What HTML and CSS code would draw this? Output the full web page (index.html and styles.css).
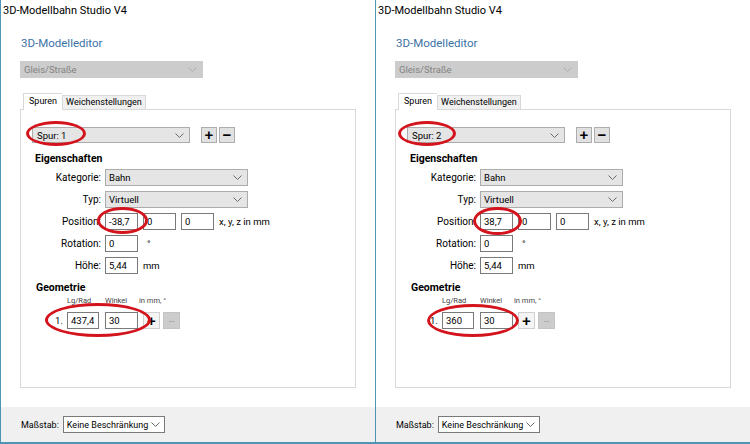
FILE: index.html
```html
<!DOCTYPE html>
<html lang="de">
<head>
  <meta charset="UTF-8">
  <title>3D-Modellbahn Studio V4 | Modelleditor</title>
  <link rel="stylesheet" href="styles.css">
</head>
<body>
<div class="screen">

  <!-- Fenster 1: Spur 1 -->
  <div class="win">
    <div class="titlebar">3D-Modellbahn Studio V4</div>
    <div class="content">
      <h1 class="heading">3D-Modelleditor</h1>
      <div class="combo combo-disabled combo-type">
        <span>Gleis/Straße</span>
        <svg class="chev" width="9" height="5" viewBox="0 0 9 5"><polyline points="0.5,0.5 4.5,4.5 8.5,0.5" /></svg>
      </div>
      <div class="tabs">
        <div class="tab active">Spuren</div>
        <div class="tab">Weichenstellungen</div>
      </div>
      <div class="panel">
        <div class="spur-row">
          <div class="combo combo-spur">
            <span>Spur: 1</span>
            <svg class="chev" width="9" height="5" viewBox="0 0 9 5"><polyline points="0.5,0.5 4.5,4.5 8.5,0.5" /></svg>
          </div>
          <button class="btn btn-add">+</button>
          <button class="btn btn-remove">−</button>
        </div>

        <div class="group-title">Eigenschaften</div>
        <div class="form">
          <label>Kategorie:</label>
          <div class="combo combo-wide">
            <span>Bahn</span>
            <svg class="chev" width="9" height="5" viewBox="0 0 9 5"><polyline points="0.5,0.5 4.5,4.5 8.5,0.5" /></svg>
          </div>
          <label>Typ:</label>
          <div class="combo combo-wide">
            <span>Virtuell</span>
            <svg class="chev" width="9" height="5" viewBox="0 0 9 5"><polyline points="0.5,0.5 4.5,4.5 8.5,0.5" /></svg>
          </div>
          <label>Position:</label>
          <div class="field-row">
            <div class="input">-38,7</div>
            <div class="input">0</div>
            <div class="input">0</div>
            <span class="unit">x, y, z in mm</span>
          </div>
          <label>Rotation:</label>
          <div class="field-row">
            <div class="input">0</div>
            <span class="unit unit-deg">°</span>
          </div>
          <label>Höhe:</label>
          <div class="field-row">
            <div class="input">5,44</div>
            <span class="unit">mm</span>
          </div>
        </div>

        <div class="group-title geo-title">Geometrie</div>
        <div class="geo-head">
          <span class="geo-num"></span>
          <span class="geo-col1">Lg/Rad</span>
          <span class="geo-col2">Winkel</span>
          <span>in mm, °</span>
        </div>
        <div class="geo-row">
          <span class="geo-num">1.</span>
          <div class="input input-len">437,4</div>
          <div class="input input-angle">30</div>
          <button class="btn btn-geo">+</button>
          <button class="btn btn-off">--</button>
        </div>
      </div>
    </div>
    <div class="statusbar">
      <span>Maßstab:</span>
      <div class="combo combo-scale">
        <span>Keine Beschränkung</span>
        <svg class="chev" width="9" height="5" viewBox="0 0 9 5"><polyline points="0.5,0.5 4.5,4.5 8.5,0.5" /></svg>
      </div>
    </div>

    <div class="mark mark-spur"></div>
    <div class="mark mark-pos"></div>
    <div class="mark mark-geo"></div>
  </div>

  <!-- Fenster 2: Spur 2 -->
  <div class="win win-right">
    <div class="titlebar">3D-Modellbahn Studio V4</div>
    <div class="content">
      <h1 class="heading">3D-Modelleditor</h1>
      <div class="combo combo-disabled combo-type">
        <span>Gleis/Straße</span>
        <svg class="chev" width="9" height="5" viewBox="0 0 9 5"><polyline points="0.5,0.5 4.5,4.5 8.5,0.5" /></svg>
      </div>
      <div class="tabs">
        <div class="tab active">Spuren</div>
        <div class="tab">Weichenstellungen</div>
      </div>
      <div class="panel">
        <div class="spur-row">
          <div class="combo combo-spur">
            <span>Spur: 2</span>
            <svg class="chev" width="9" height="5" viewBox="0 0 9 5"><polyline points="0.5,0.5 4.5,4.5 8.5,0.5" /></svg>
          </div>
          <button class="btn btn-add">+</button>
          <button class="btn btn-remove">−</button>
        </div>

        <div class="group-title">Eigenschaften</div>
        <div class="form">
          <label>Kategorie:</label>
          <div class="combo combo-wide">
            <span>Bahn</span>
            <svg class="chev" width="9" height="5" viewBox="0 0 9 5"><polyline points="0.5,0.5 4.5,4.5 8.5,0.5" /></svg>
          </div>
          <label>Typ:</label>
          <div class="combo combo-wide">
            <span>Virtuell</span>
            <svg class="chev" width="9" height="5" viewBox="0 0 9 5"><polyline points="0.5,0.5 4.5,4.5 8.5,0.5" /></svg>
          </div>
          <label>Position:</label>
          <div class="field-row">
            <div class="input">38,7</div>
            <div class="input">0</div>
            <div class="input">0</div>
            <span class="unit">x, y, z in mm</span>
          </div>
          <label>Rotation:</label>
          <div class="field-row">
            <div class="input">0</div>
            <span class="unit unit-deg">°</span>
          </div>
          <label>Höhe:</label>
          <div class="field-row">
            <div class="input">5,44</div>
            <span class="unit">mm</span>
          </div>
        </div>

        <div class="group-title geo-title">Geometrie</div>
        <div class="geo-head">
          <span class="geo-num"></span>
          <span class="geo-col1">Lg/Rad</span>
          <span class="geo-col2">Winkel</span>
          <span>in mm, °</span>
        </div>
        <div class="geo-row">
          <span class="geo-num">1.</span>
          <div class="input input-len">360</div>
          <div class="input input-angle">30</div>
          <button class="btn btn-geo">+</button>
          <button class="btn btn-off">--</button>
        </div>
      </div>
    </div>
    <div class="statusbar">
      <span>Maßstab:</span>
      <div class="combo combo-scale">
        <span>Keine Beschränkung</span>
        <svg class="chev" width="9" height="5" viewBox="0 0 9 5"><polyline points="0.5,0.5 4.5,4.5 8.5,0.5" /></svg>
      </div>
    </div>

    <div class="mark mark-spur"></div>
    <div class="mark mark-pos"></div>
    <div class="mark mark-geo"></div>
  </div>

</div>
</body>
</html>
```

FILE: styles.css
```css
* {
  box-sizing: border-box;
}
body {
  margin: 0;
  background: #fff;
  font-family: Roboto, "Liberation Sans", sans-serif;
  font-size: 9.5px;
  color: #000;
}
.screen {
  display: flex;
  width: 750px;
  height: 444px;
}
.win {
  position: relative;
  width: 375px;
  height: 444px;
  display: flex;
  flex-direction: column;
  border-left: 1px solid #4d94b5;
  border-bottom: 2px solid #4d94b5;
  background: #fff;
}
.titlebar {
  height: 21px;
  line-height: 21px;
  padding-left: 2px;
  font-size: 11px;
}
.content {
  flex: 1;
  padding: 14px 0 0 19px;
}
.heading {
  margin: 0;
  padding-left: 1px;
  font-size: 11.5px;
  line-height: 16px;
  font-weight: normal;
  color: #3b73a6;
}

/* Combobox */
.combo {
  display: flex;
  align-items: center;
  justify-content: space-between;
  height: 17px;
  padding: 0 5px 0 3px;
  background: #e5e5e5;
  border: 1px solid #acacac;
  white-space: nowrap;
}
.chev {
  flex-shrink: 0;
}
.chev polyline {
  fill: none;
  stroke: #6a6a6a;
  stroke-width: 1;
}
.combo-disabled {
  background: #cccccc;
  border-color: #cccccc;
  color: #838383;
}
.combo-disabled .chev polyline {
  stroke: #ababab;
}
.combo-type {
  width: 183px;
  margin-top: 10px;
}
.combo-spur {
  width: 158px;
  height: 16px;
  margin-left: 5px;
  padding-left: 4px;
}
.combo-wide {
  width: 143px;
}
.combo-scale {
  width: 102px;
  margin-left: 4px;
  padding-right: 4px;
  font-size: 9px;
  background: #fff;
  border-color: #7a7a7a;
}

/* Tabs */
.tabs {
  display: flex;
  align-items: flex-end;
  height: 16px;
  margin: 15px 0 0 3px;
  font-size: 9px;
}
.tab {
  height: 14px;
  line-height: 13px;
  padding: 0 3px;
  background: #f0f0f0;
  border: 1px solid #d9d9d9;
  border-bottom: none;
}
.tab.active {
  position: relative;
  z-index: 1;
  height: 17px;
  line-height: 15px;
  margin-bottom: -1px;
  padding: 0 5px;
  background: #fff;
  border-right: none;
}
.panel {
  width: 336px;
  height: 279px;
  padding: 17px 0 0 6px;
  border: 1px solid #d9d9d9;
}

/* Buttons */
.btn {
  width: 16px;
  height: 16px;
  padding: 0;
  font-family: "Liberation Sans", sans-serif;
  font-size: 15px;
  font-weight: bold;
  line-height: 14px;
  color: #000;
  background: #e1e1e1;
  border: 1px solid #adadad;
}
.spur-row {
  display: flex;
  align-items: center;
}
.btn-add {
  margin-left: 11px;
}
.btn-remove {
  margin-left: 2px;
}

/* Eigenschaften */
.group-title {
  margin: 9px 0 0 8px;
  font-size: 10.5px;
  font-weight: bold;
  line-height: 14px;
}
.form {
  display: grid;
  grid-template-columns: 74px auto;
  grid-auto-rows: 17px;
  column-gap: 4px;
  row-gap: 5px;
  margin-top: 3px;
}
.form label {
  text-align: right;
  line-height: 17px;
  font-size: 10px;
}
.field-row {
  display: flex;
  align-items: center;
  gap: 5px;
}
.input {
  width: 33px;
  height: 17px;
  padding-left: 3px;
  line-height: 15px;
  background: #fff;
  border: 1px solid #7a7a7a;
  white-space: nowrap;
}
.unit-deg {
  margin-left: 4px;
}

/* Geometrie */
.geo-title {
  margin: 7px 0 0 9px;
}
.geo-head {
  display: flex;
  margin: 1px 0 0 28px;
  font-size: 7.5px;
  line-height: 10px;
  color: #444;
}
.geo-num {
  width: 12px;
}
.geo-col1 {
  width: 38px;
}
.geo-col2 {
  width: 34px;
}
.geo-row {
  display: flex;
  align-items: center;
  height: 17px;
  margin: 6px 0 0 28px;
}
.input-len {
  width: 32px;
}
.input-angle {
  margin-left: 6px;
}
.btn-geo {
  width: 17px;
  height: 17px;
  margin-left: 5px;
  background: #f4f4f4;
  border-color: #d0d0d0;
}
.btn-off {
  width: 17px;
  height: 17px;
  margin-left: 3px;
  font-size: 9px;
  font-weight: normal;
  color: #9a9a9a;
  background: #cccccc;
  border-color: #c4c4c4;
}

/* Statusleiste */
.statusbar {
  display: flex;
  align-items: center;
  height: 35px;
  padding-left: 20px;
  background: #f0f0f0;
  font-size: 9px;
}

/* Rote Markierungen */
.mark {
  position: absolute;
  border: 3px solid #d3141c;
  border-radius: 50%;
}
.mark-spur {
  left: 25px;
  top: 121px;
  width: 60px;
  height: 25px;
}
.mark-pos {
  left: 96px;
  top: 207px;
  width: 51px;
  height: 27px;
}
.mark-geo {
  left: 44px;
  top: 303px;
  width: 106px;
  height: 34px;
}
.win-right .mark-spur {
  left: 22px;
  width: 58px;
}
.win-right .mark-pos {
  left: 97px;
  width: 49px;
  height: 28px;
}
.win-right .mark-geo {
  left: 51px;
  top: 304px;
  width: 92px;
  height: 33px;
}
```
